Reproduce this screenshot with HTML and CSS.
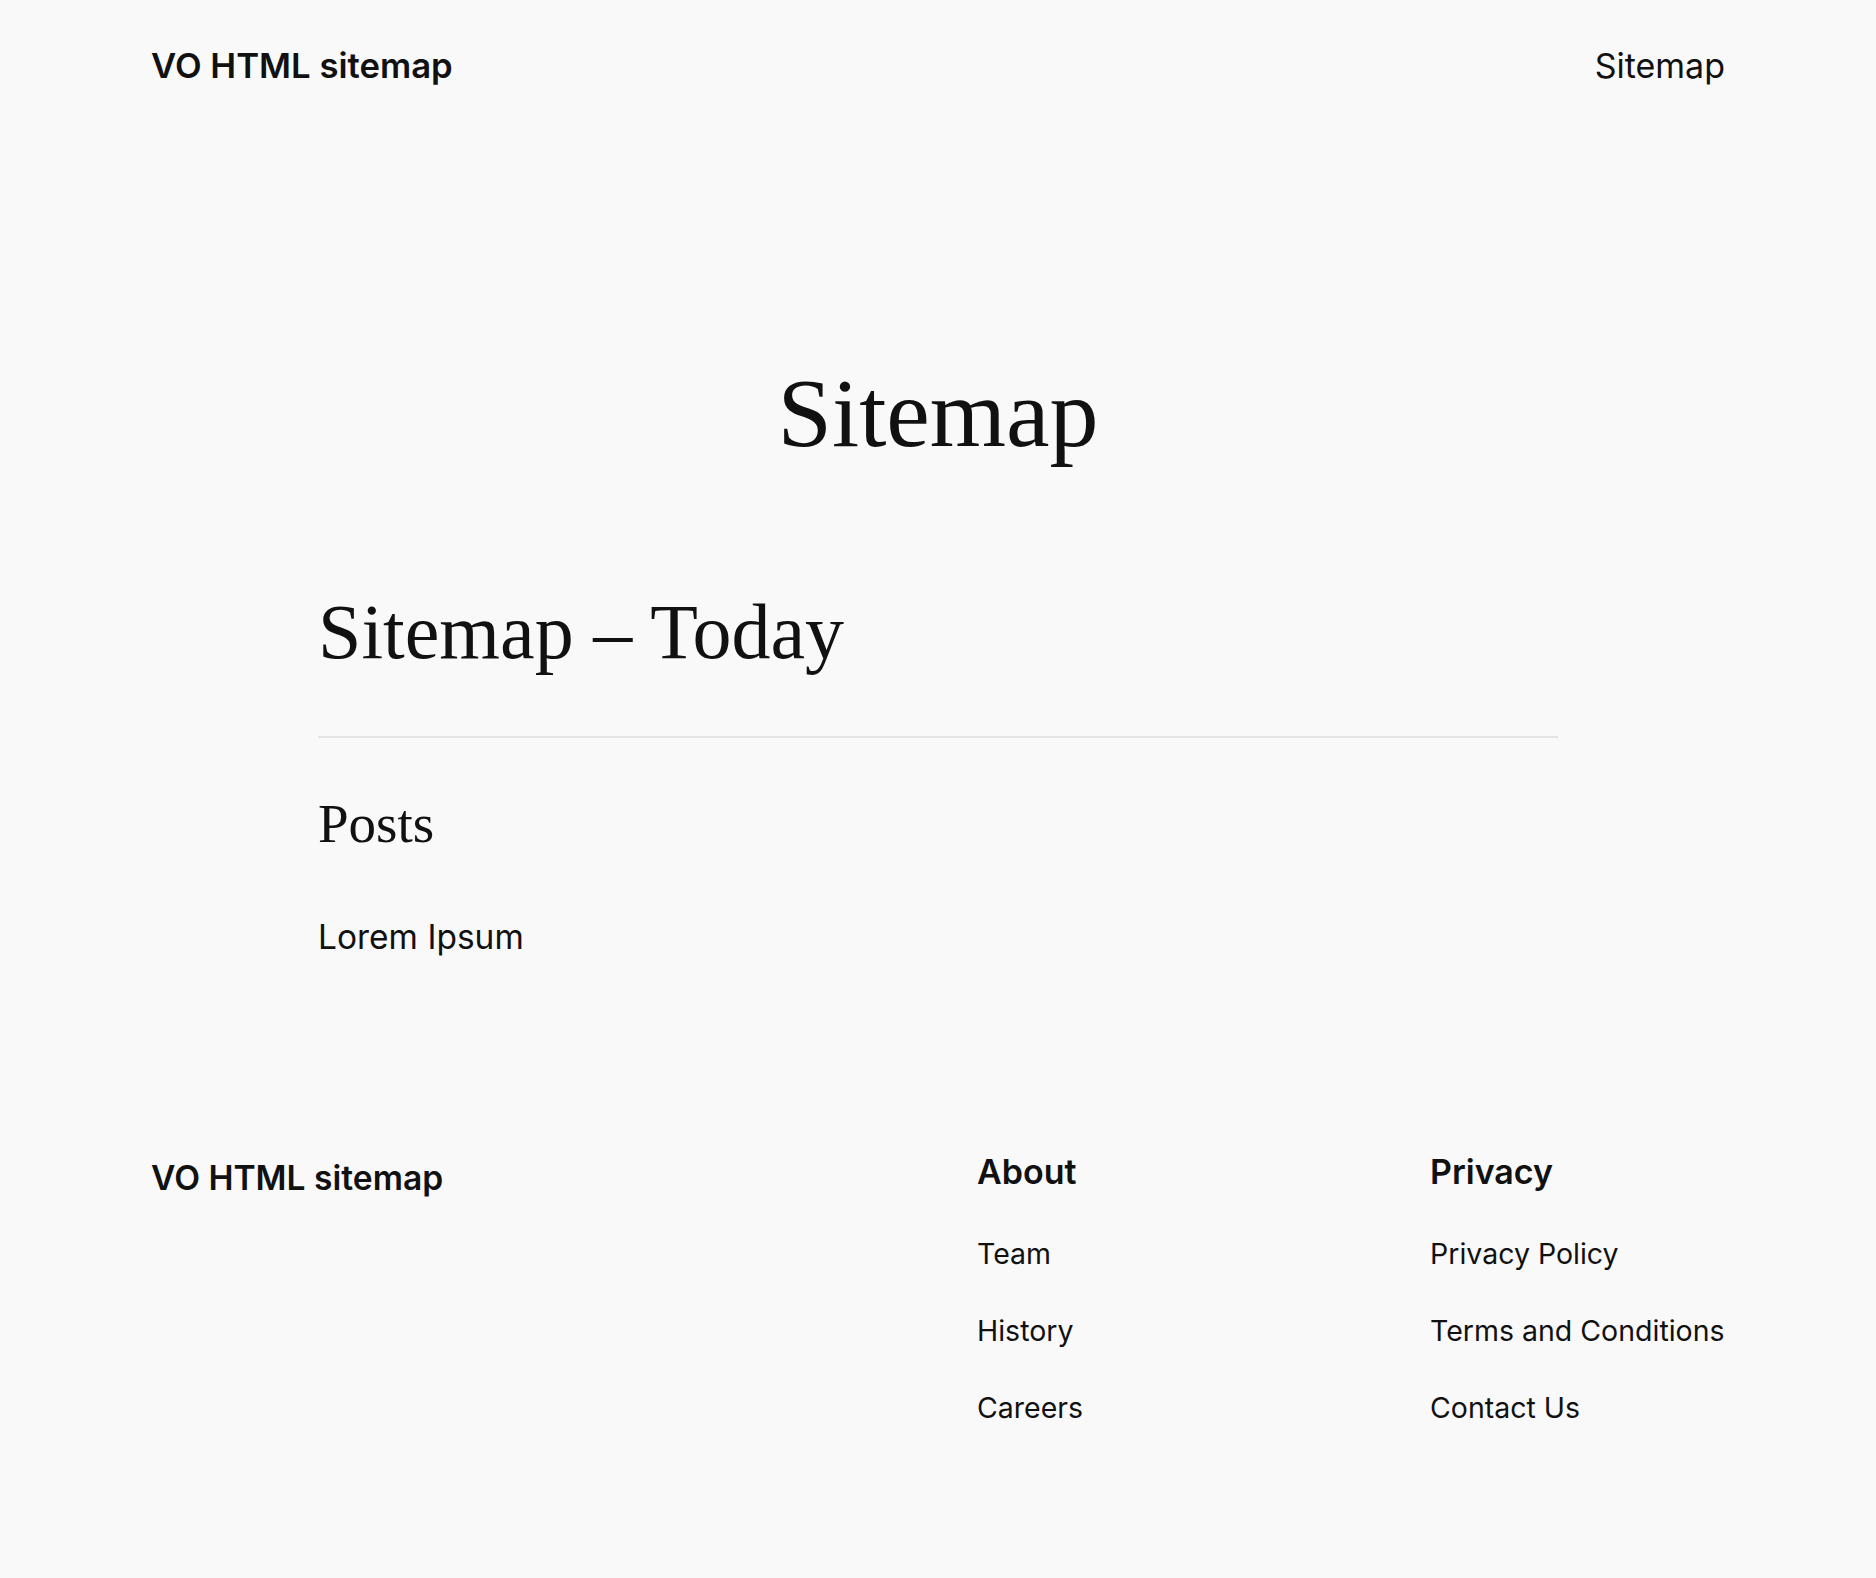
FILE: index.html
```html
<!DOCTYPE html>
<html lang="en">
<head>
<meta charset="utf-8">
<title>Sitemap – VO HTML sitemap</title>
<link rel="stylesheet" href="styles.css">
</head>
<body>
<header class="site-header">
  <a class="site-title" href="#">VO HTML sitemap</a>
  <nav class="site-nav"><a href="#">Sitemap</a></nav>
</header>
<main class="site-main">
  <h1 class="page-title">Sitemap</h1>
  <div class="content">
    <h2 class="sitemap-title">Sitemap – Today</h2>
    <hr class="separator">
    <h3 class="section-title">Posts</h3>
    <ul class="post-list">
      <li><a href="#">Lorem Ipsum</a></li>
    </ul>
  </div>
</main>
<footer class="site-footer">
  <a class="footer-title" href="#">VO HTML sitemap</a>
  <div class="footer-cols">
    <div class="footer-col">
      <h4 class="footer-heading">About</h4>
      <ul class="footer-links">
        <li><a href="#">Team</a></li>
        <li><a href="#">History</a></li>
        <li><a href="#">Careers</a></li>
      </ul>
    </div>
    <div class="footer-col">
      <h4 class="footer-heading">Privacy</h4>
      <ul class="footer-links">
        <li><a href="#">Privacy Policy</a></li>
        <li><a href="#">Terms and Conditions</a></li>
        <li><a href="#">Contact Us</a></li>
      </ul>
    </div>
  </div>
</footer>
</body>
</html>
```
FILE: styles.css
```css
* { box-sizing: border-box; }
html, body { margin: 0; padding: 0; }
body {
  background: #f9f9f9;
  color: #111111;
  font-family: "Inter", "Liberation Sans", sans-serif;
  font-size: 33.5px;
  line-height: 1.6;
}
a { color: inherit; text-decoration: none; }
ul { list-style: none; margin: 0; padding: 0; }

.site-header {
  display: flex;
  justify-content: space-between;
  align-items: baseline;
  padding: 45px 151px 0;
}
.site-title {
  font-size: 34.7px;
  font-weight: 600;
  line-height: 1.2;
}
.site-nav {
  font-size: 34px;
  line-height: 1.2;
}

.site-main {
  padding: 268px 0 0;
}
.page-title {
  margin: 0;
  text-align: center;
  font-family: "Liberation Serif", serif;
  font-weight: 400;
  font-size: 98px;
  line-height: 1.2;
}
.content {
  width: 1240px;
  margin: 113px auto 0;
}
.sitemap-title {
  margin: 0;
  font-family: "Liberation Serif", serif;
  font-weight: 400;
  font-size: 78px;
  line-height: 1.2;
}
.separator {
  margin: 57px 0 0;
  border: 0;
  height: 2px;
  background: #e3e3e3;
}
.section-title {
  margin: 53px 0 0;
  font-family: "Liberation Serif", serif;
  font-weight: 400;
  font-size: 55px;
  line-height: 1.2;
}
.post-list {
  margin-top: 54px;
}

.site-footer {
  display: flex;
  justify-content: space-between;
  align-items: flex-start;
  padding: 187px 151px 152px;
}
.footer-title {
  margin-top: 6px;
  font-size: 33.6px;
  font-weight: 600;
  line-height: 1.2;
}
.footer-cols {
  display: flex;
  gap: 158px;
}
.footer-col {
  width: 295px;
}
.footer-heading {
  margin: 0;
  font-size: 34px;
  font-weight: 600;
  line-height: 1.2;
}
.footer-links {
  margin-top: 45px;
  display: flex;
  flex-direction: column;
  gap: 42.4px;
  font-size: 28.5px;
  line-height: 1.2;
}
```
